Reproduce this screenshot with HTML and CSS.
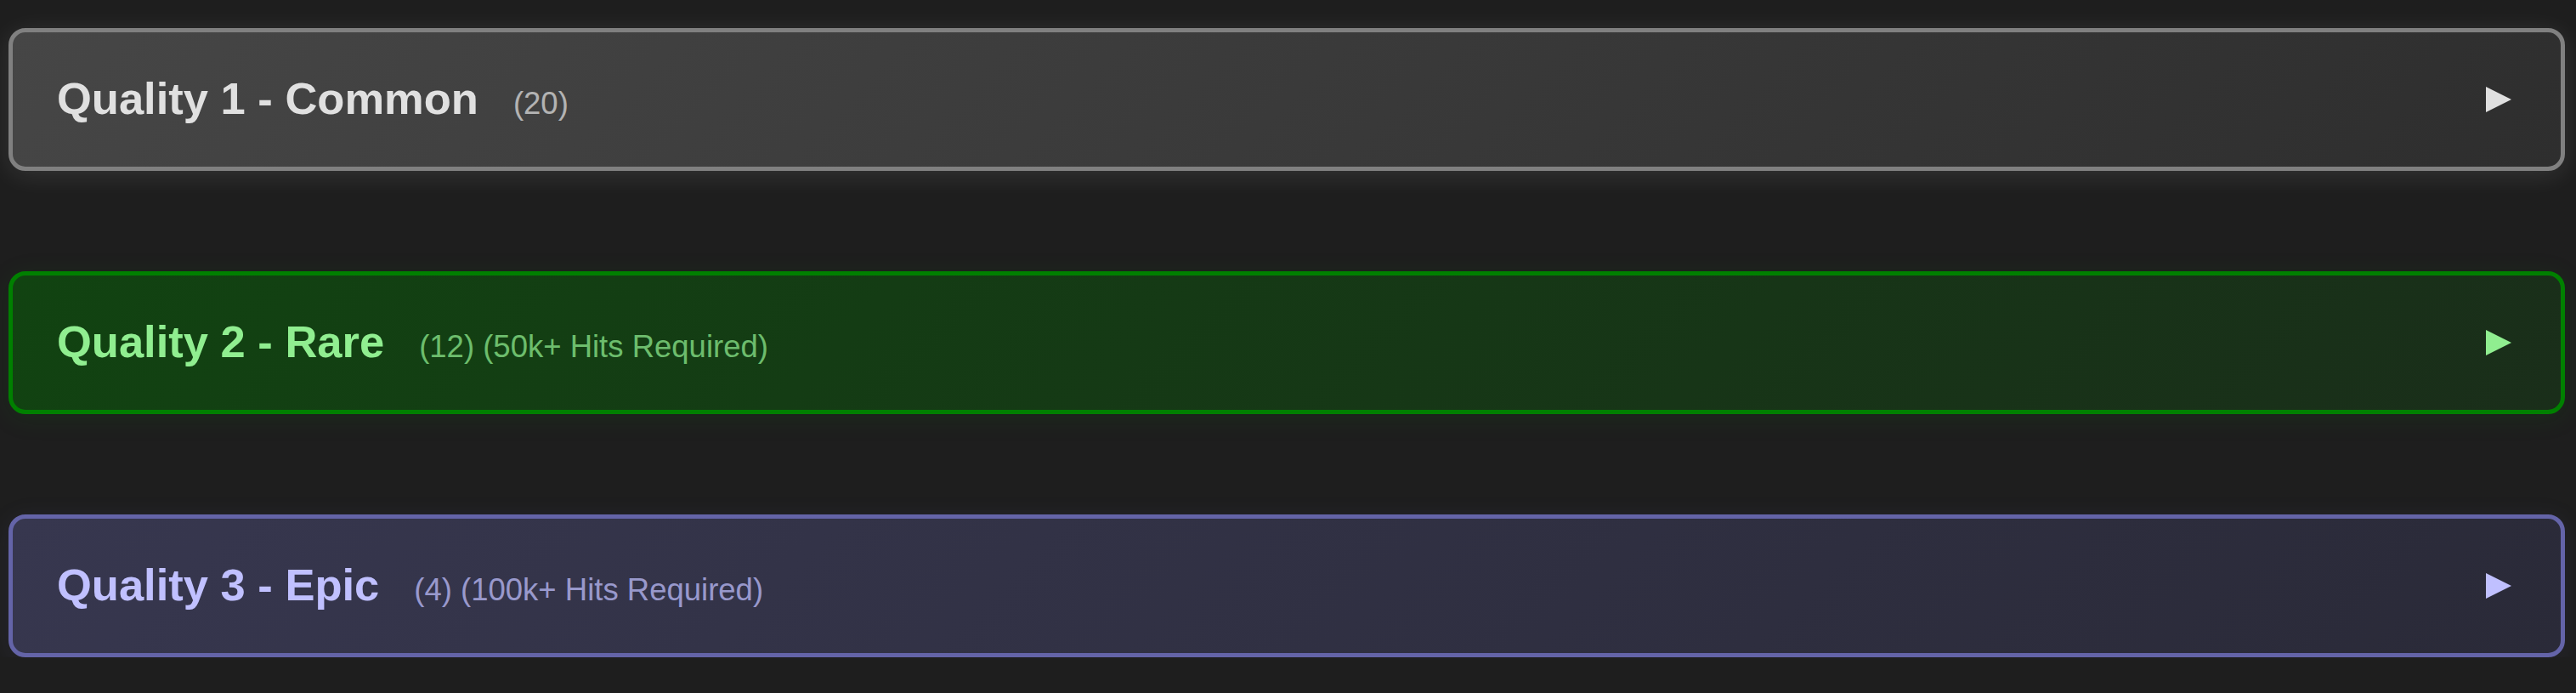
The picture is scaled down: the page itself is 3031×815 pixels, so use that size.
FILE: index.html
```html
<!DOCTYPE html>
<html lang="en">
<head>
  <meta charset="UTF-8">
  <meta name="viewport" content="width=device-width, initial-scale=1.0">
  <title>Quality Tiers</title>
  <link rel="stylesheet" href="styles.css">
</head>
<body>

<div class="quality-list">

  <!-- Quality 1 -->
  <section class="quality-group common">
    <div class="quality-header">
      <h2 class="quality-title">Quality 1 - Common<span class="quality-count">(20)</span></h2>
      <svg class="toggle-arrow" width="30" height="30" viewBox="0 0 30 30"><polygon points="0,0 30,15 0,30"/></svg>
    </div>
  </section>

  <!-- Quality 2 -->
  <section class="quality-group rare">
    <div class="quality-header">
      <h2 class="quality-title">Quality 2 - Rare<span class="quality-count">(12) (50k+ Hits Required)</span></h2>
      <svg class="toggle-arrow" width="30" height="30" viewBox="0 0 30 30"><polygon points="0,0 30,15 0,30"/></svg>
    </div>
  </section>

  <!-- Quality 3 -->
  <section class="quality-group epic">
    <div class="quality-header">
      <h2 class="quality-title">Quality 3 - Epic<span class="quality-count">(4) (100k+ Hits Required)</span></h2>
      <svg class="toggle-arrow" width="30" height="30" viewBox="0 0 30 30"><polygon points="0,0 30,15 0,30"/></svg>
    </div>
  </section>

</div>

</body>
</html>
```

FILE: styles.css
```css
body {
  font-family: "Liberation Sans", Arial, sans-serif;
  background-color: #1e1e1e;
  margin: 0;
  padding: 33px 13px 0 10px;
}

/* List */
.quality-list {
  display: flex;
  flex-direction: column;
  gap: 118px;
}

/* Group */
.quality-group {
  height: 168px;
  box-sizing: border-box;
  border: 5px solid #808080;
  border-radius: 20px;
  display: flex;
  align-items: center;
}
.quality-header {
  flex: 1;
  display: flex;
  justify-content: space-between;
  align-items: center;
  padding: 0 58px 0 52px;
}
.quality-title {
  margin: 0 0 4px;
  font-size: 52.5px;
  font-weight: bold;
  display: flex;
  align-items: baseline;
}
.quality-count {
  margin-left: 41px;
  font-size: 36.5px;
  font-weight: normal;
  opacity: 0.72;
}

/* Tiers */
.common {
  border-color: #808080;
  background: linear-gradient(135deg, #464646, #2e2e2e);
  box-shadow: 0 5px 30px rgba(255, 255, 255, 0.1);
  color: #e0e0e0;
}
.common .toggle-arrow {
  fill: #e0e0e0;
}
.rare {
  border-color: #008000;
  background: linear-gradient(135deg, #114311, #1a2e1a);
  box-shadow: 0 5px 30px rgba(0, 128, 0, 0.12);
  color: #90ee90;
}
.rare .toggle-arrow {
  fill: #90ee90;
}
.epic {
  border-color: #6464a8;
  background: linear-gradient(135deg, #37374f, #2a2a38);
  box-shadow: 0 5px 30px rgba(120, 120, 200, 0.1);
  color: #c0c0ff;
}
.epic .toggle-arrow {
  fill: #c0c0ff;
}
```
